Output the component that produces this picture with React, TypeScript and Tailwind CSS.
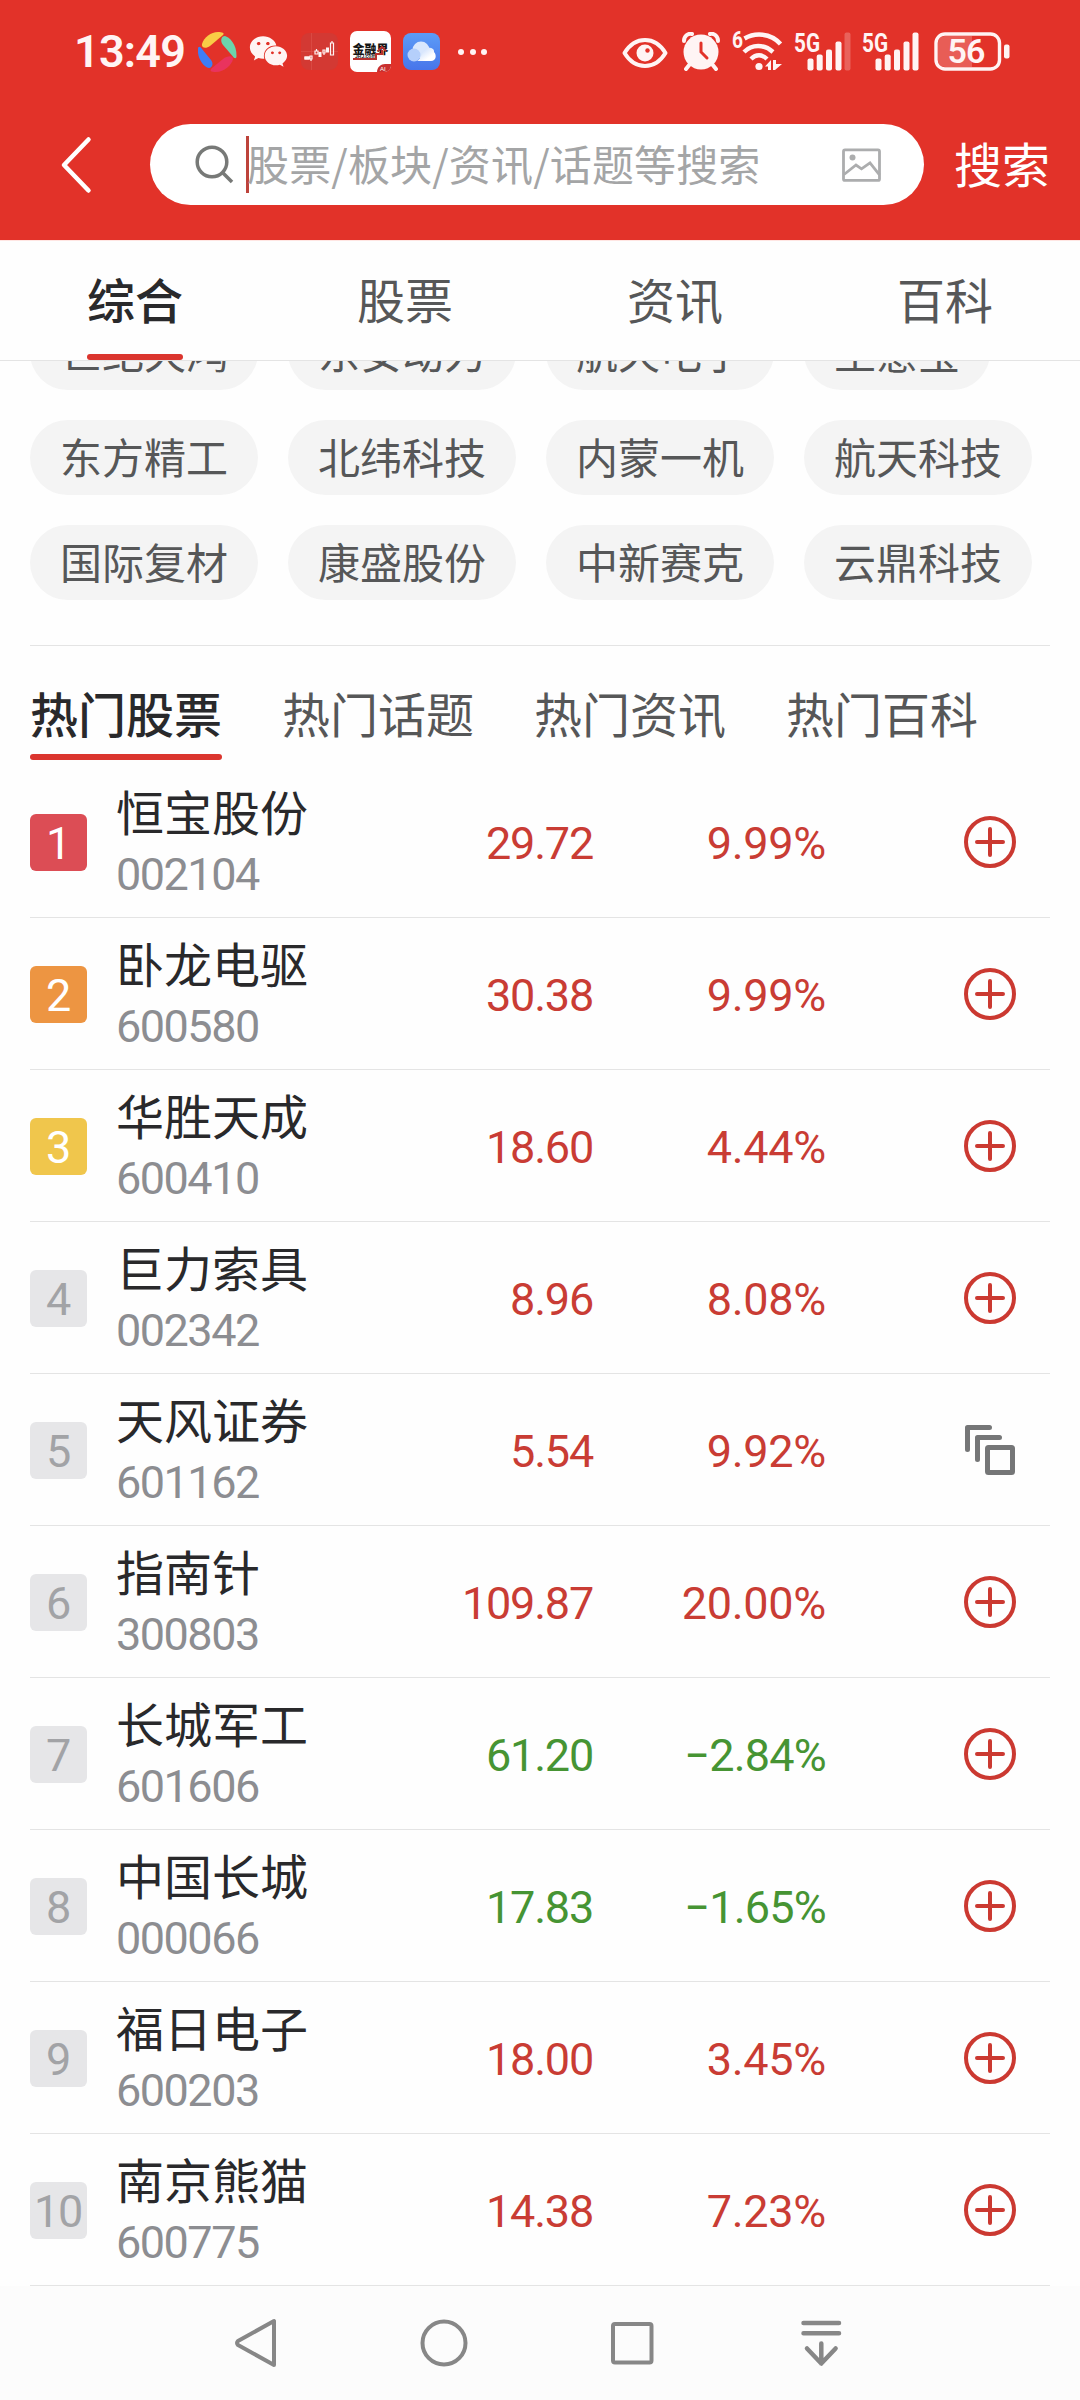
import { useState } from 'react';
import { FaWeixin } from 'react-icons/fa';

interface Stock {
  name: string;
  code: string;
  price: string;
  change: string;
  added?: boolean;
}

const tabs = ['综合', '股票', '资讯', '百科'];

const hotTabs = ['热门股票', '热门话题', '热门资讯', '热门百科'];

const keywords = [
  ['世纪天鸿', '东安动力', '航天电子', '生意宝'],
  ['东方精工', '北纬科技', '内蒙一机', '航天科技'],
  ['国际复材', '康盛股份', '中新赛克', '云鼎科技'],
];

const stocks: Stock[] = [
  { name: '恒宝股份', code: '002104', price: '29.72', change: '9.99%' },
  { name: '卧龙电驱', code: '600580', price: '30.38', change: '9.99%' },
  { name: '华胜天成', code: '600410', price: '18.60', change: '4.44%' },
  { name: '巨力索具', code: '002342', price: '8.96', change: '8.08%' },
  { name: '天风证券', code: '601162', price: '5.54', change: '9.92%', added: true },
  { name: '指南针', code: '300803', price: '109.87', change: '20.00%' },
  { name: '长城军工', code: '601606', price: '61.20', change: '−2.84%' },
  { name: '中国长城', code: '000066', price: '17.83', change: '−1.65%' },
  { name: '福日电子', code: '600203', price: '18.00', change: '3.45%' },
  { name: '南京熊猫', code: '600775', price: '14.38', change: '7.23%' },
];

const rankStyles = ['bg-[#dc4d55] text-white', 'bg-[#ed9542] text-white', 'bg-[#f0c64c] text-white'];

function Signal({ weak }: { weak?: boolean }) {
  return (
    <svg width="57" height="40" viewBox="0 0 57 40" fill="#fff4f4" className="shrink-0 overflow-visible">
      <text x="0" y="19.500" fontSize="26" fontWeight="700" textLength="26" lengthAdjust="spacingAndGlyphs" fontFamily="Roboto, sans-serif">5G</text>
      <rect x="13.5" y="26.5" width="6" height="12" rx="2" />
      <rect x="22.7" y="22.5" width="6" height="16" rx="2" />
      <rect x="32" y="17.5" width="6" height="21" rx="2" />
      <rect x="41.5" y="9.5" width="6" height="29" rx="2" />
      <rect x="50.5" y="0.5" width="6" height="38" rx="2" opacity={weak ? 0.25 : 1} />
    </svg>
  );
}

function StatusBar() {
  return (
    <div className="flex h-[103px] items-center pl-[74px] pr-[70px] text-[#fff4f4]">
      <span className="w-[124px] font-[Roboto] text-[45px] font-semibold leading-none tracking-[-0.8px]">13:49</span>

      <svg width="39" height="40" viewBox="0 0 39 40" className="shrink-0">
        <path d="M4 12C6 5 13 0 20 0c4 0 7 1 5 3L12 14c-4 3-9 2-8-2Z" fill="#f9cd46" />
        <path d="M27 4c4 1 12 8 11.500 20 0 3-2 3-4 0L25 13c-3-4-2-9 2-9Z" fill="#6cd3ac" />
        <path d="M35 27c-1 6-9 13-17 13-5 0-7-1-4-4l11-9c4-3 10-4 10 0Z" fill="#e9335e" />
        <path d="M11 36C5 35-1 25 0 17c0-3 2-3 4 0l9 11c3 4 1 8-2 8Z" fill="#3e7df5" />
      </svg>
      <FaWeixin className="ml-3 size-[39px] shrink-0" />

      <svg width="37" height="37" viewBox="0 0 37 37" className="ml-[13px] shrink-0">
        <rect width="37" height="37" rx="8" fill="#d33933" />
        <path d="M0 18.500h37M10.500 0v37" stroke="#dd5049" strokeWidth="0.700" />
        <g fill="none" stroke="#fff4f4" strokeWidth="1.200">
          <path d="M4 24h4v2H4zM9 23h2v3H9zM14 18h3v3h-3zM22 17h2v3h-2zM29.500 10h3v12h-3z" />
          <path d="M10 26v2M15.500 16v2M23 20v2M31 8v2" />
        </g>
        <path d="M3.500 23.500h5v3h-5zM17.500 19h3v5h-3zM25 14.500h3v5h-3z" fill="#fff4f4" />
      </svg>

      <svg width="41" height="41" viewBox="0 0 41 41" className="ml-[12px] shrink-0 overflow-visible">
        <rect width="41" height="41" rx="7" fill="#fff" />
        <text x="2.500" y="22.500" fontSize="12" fontWeight="900" textLength="36" lengthAdjust="spacingAndGlyphs" fill="#151515" fontFamily="'Noto Sans CJK SC', sans-serif">金融界</text>
        <text x="5" y="27" fontSize="5" fontWeight="700" fill="#151515" fontFamily="'Liberation Sans', sans-serif">JRJ.com</text>
        <path d="M3 28h23v-5h6v-4M28 20l4-4 4 4" fill="none" stroke="#b8322f" strokeWidth="2" />
        <path d="M27 41c0-5 4-8 8-8h6v1c0 4-3 7-7 7Z" fill="#c9302e" />
        <text x="30" y="39.500" fontSize="6" fill="#fff" fontFamily="'Liberation Sans', sans-serif">AI</text>
      </svg>

      <svg width="37" height="37" viewBox="0 0 37 37" className="ml-[12px] shrink-0">
        <defs>
          <linearGradient id="sky" x1="0" y1="0" x2="0" y2="1">
            <stop offset="0" stopColor="#5d9cf7" />
            <stop offset="1" stopColor="#4775ea" />
          </linearGradient>
          <linearGradient id="cloud" x1="0" y1="0" x2="1" y2="1">
            <stop offset="0" stopColor="#bcd4fb" />
            <stop offset="0.700" stopColor="#fff" />
          </linearGradient>
        </defs>
        <rect width="37" height="37" rx="8" fill="url(#sky)" />
        <circle cx="18" cy="17" r="8.500" fill="#d9e7fd" />
        <circle cx="11" cy="22" r="6.500" fill="#b5cffb" />
        <path d="M14 28c2-1 4-4 5-7 2-5 7-8 11-5 1 1 1 2 1 3 3 3 2 9-3 9Z" fill="url(#cloud)" />
      </svg>

      <div className="ml-[18px] flex gap-[5.500px]">
        <span className="size-[6px] rounded-full bg-[#fff4f4]" />
        <span className="size-[6px] rounded-full bg-[#fff4f4]" />
        <span className="size-[6px] rounded-full bg-[#fff4f4]" />
      </div>

      <div className="ml-auto flex items-center">
        <svg width="46" height="32" viewBox="0 0 46 32" className="mt-[2px]">
          <path d="M2.500 16C8 7 15 3 23 3s15 4 20.500 13C38 25 31 29 23 29S8 25 2.500 16Z" fill="none" stroke="#fff4f4" strokeWidth="4" strokeLinejoin="round" />
          <circle cx="23" cy="16" r="8.500" fill="#fff4f4" />
          <circle cx="25.500" cy="13.500" r="2.200" fill="#e23229" />
        </svg>
        <svg width="38" height="39" viewBox="0 0 38 39" className="ml-[14px]">
          <circle cx="19" cy="20" r="17.500" fill="#fff4f4" />
          <path d="M2 9C2 4 6 1 10 2M36 9c0-5-4-8-8-7" fill="none" stroke="#fff4f4" strokeWidth="4" strokeLinecap="round" />
          <path d="m8 32-4 5M30 32l4 5" stroke="#fff4f4" strokeWidth="4" strokeLinecap="round" />
          <path d="M19 11v9l6 6" fill="none" stroke="#e23229" strokeWidth="3" strokeLinecap="round" />
        </svg>
        <svg width="52" height="41" viewBox="0 0 52 41" className="ml-[12px] overflow-visible">
          <text x="0" y="16.500" fontSize="23" fontWeight="700" textLength="11" lengthAdjust="spacingAndGlyphs" fill="#fff4f4" fontFamily="Roboto, sans-serif">6</text>
          <g fill="none" stroke="#fff4f4" strokeWidth="4.400">
            <path d="M12.500 7.500c10-6 26-6 36 5.500" />
            <path d="M12 21c8-8 20-8 29 0" />
            <path d="M19 28c5-5 11-5 16 0" />
          </g>
          <circle cx="27" cy="35.500" r="3.600" fill="#fff4f4" />
          <path d="M33 35.500 39 29v10h-3v-3.500Zm8-6.500h3v4h6l-7 6h-2Z" fill="#fff4f4" />
        </svg>
        <div className="ml-[10px] flex gap-[11px]">
          <Signal weak />
          <Signal />
        </div>
        <svg width="76" height="39" viewBox="0 0 76 39" className="ml-[15px]">
          <rect x="2" y="2" width="63.500" height="35" rx="9" fill="none" stroke="#fff4f4" strokeWidth="3.400" />
          <path d="M11 4h27v31H11c-4 0-7-3-7-7V11c0-4 3-7 7-7Z" fill="#fff4f4" opacity="0.220" />
          <rect x="70" y="12.500" width="5.500" height="14" rx="2" fill="#fff4f4" />
          <text x="13.500" y="31" fontSize="34" fontWeight="600" textLength="38" fill="#fff4f4" fontFamily="Roboto, sans-serif">56</text>
        </svg>
      </div>
    </div>
  );
}

function SearchBar() {
  return (
    <div className="flex h-[124px] items-center pb-px">
      <svg width="150" height="60" viewBox="0 0 150 60" fill="none" className="shrink-0">
        <path d="M88.500 4.500 64 30l24.500 25.500" stroke="#fff" strokeWidth="4.500" strokeLinecap="round" strokeLinejoin="round" />
      </svg>
      <div className="flex h-[81px] w-[774px] items-center rounded-full bg-white pl-[45px] pr-[43px]">
        <svg width="40" height="40" viewBox="0 0 40 40" fill="none" stroke="#777977" strokeWidth="3.500" className="shrink-0">
          <circle cx="17" cy="17" r="14.800" />
          <path d="m27.500 27.500 9.500 9.500" />
        </svg>
        <div className="ml-[11px] h-[57px] w-[3px] shrink-0 bg-[#bd433b]" />
        <span className="-ml-[2px] flex-1 whitespace-nowrap pb-[4px] text-[42px] leading-none tracking-[0.15px] text-[#a4a5a6]">股票/板块/资讯/话题等搜索</span>
        <svg width="39" height="34" viewBox="0 0 39 34" fill="none" stroke="#acadae" strokeWidth="2.800" className="shrink-0">
          <rect x="1.500" y="1.900" width="36" height="30.500" rx="1.500" />
          <path d="m2 26.500 12-9.500 5.500 3.800 8.500-6 9.500 12" />
          <circle cx="10.500" cy="9.500" r="3" fill="#acadae" stroke="none" />
        </svg>
      </div>
      <span className="ml-[30px] pb-[6px] text-[48px] leading-none text-white">搜索</span>
    </div>
  );
}

function AddIcon() {
  return (
    <svg width="52" height="52" viewBox="0 0 52 52" fill="none" stroke="#cb3931" strokeWidth="4">
      <circle cx="26" cy="26" r="24" />
      <path d="M13 26h26M26 13v26" strokeLinecap="round" />
    </svg>
  );
}

function AddedIcon() {
  return (
    <svg width="52" height="52" viewBox="0 0 52 52" fill="none" stroke="#757677" strokeWidth="5" strokeLinecap="round" strokeLinejoin="round">
      <path d="M3.500 25.500v-22h22" />
      <path d="M13.500 35.500v-22h22" />
      <rect x="23.500" y="23.500" width="25" height="25" rx="1" />
    </svg>
  );
}

export default function App() {
  const [tab, setTab] = useState(0);
  const [hotTab, setHotTab] = useState(0);

  return (
    <div className="flex h-[2400px] w-[1080px] flex-col overflow-hidden bg-[#fefefe] font-['Noto_Sans_CJK_SC',sans-serif]">
      <header className="h-[240px] shrink-0 bg-[#e23229]">
        <StatusBar />
        <SearchBar />
      </header>

      <nav className="grid h-[121px] shrink-0 grid-cols-4 border-b border-[#e4e4e4] border-t border-t-[#ffe6e3]">
        {tabs.map((t, i) => (
          <button
            key={t}
            onClick={() => setTab(i)}
            className={`flex flex-col items-center justify-between pt-[32px] text-[48px] leading-[50px] ${
              i === tab ? 'font-medium text-[#29292b]' : 'text-[#565758]'
            }`}
          >
            {t}
            {i === tab && <span className="h-[6px] w-24 rounded-full bg-[#db352e]" />}
          </button>
        ))}
      </nav>

      {/* Keyword chips, first row is scrolled under the tabs */}
      <section className="h-[284px] shrink-0 overflow-hidden px-[30px]">
        <div className="-mt-[46px] space-y-[30px]">
          {keywords.map((row) => (
            <div key={row[0]} className="flex gap-[30px]">
              {row.map((k) => (
                <span key={k} className="flex h-[75px] items-center rounded-full bg-[#f4f4f4] px-[30px] pb-[4px] text-[42px] leading-none text-[#565758]">
                  {k}
                </span>
              ))}
            </div>
          ))}
        </div>
      </section>

      <main className="mx-[30px] shrink-0 border-t border-[#e4e4e4]">
        <div className="flex h-[120px] gap-[60px]">
          {hotTabs.map((t, i) => (
            <button
              key={t}
              onClick={() => setHotTab(i)}
              className={`flex h-[114px] w-48 flex-col justify-between pt-[41px] text-[48px] leading-[50px] ${
                i === hotTab ? 'font-medium text-[#29292b]' : 'text-[#565758]'
              }`}
            >
              {t}
              {i === hotTab && <span className="h-[6px] w-full rounded-full bg-[#db352e]" />}
            </button>
          ))}
        </div>

        {stocks.map((s, i) => {
          const down = s.change.startsWith('−');
          const color = down ? 'text-[#469433]' : 'text-[#c93c34]';
          return (
            <div key={s.code} className="flex h-[152px] items-center border-b border-[#e4e4e4] pt-px font-[Roboto] text-[45px] leading-none tracking-[-1.2px]">
              <span className={`flex size-[57px] shrink-0 items-center justify-center rounded-md pr-px pt-[2px] ${rankStyles[i] ?? 'bg-[#e6e6e8] text-[#a2a3a6]'}`}>
                {i + 1}
              </span>
              <div className="ml-[29px] w-[240px] shrink-0">
                <div className="font-['Noto_Sans_CJK_SC',sans-serif] text-[48px] leading-[55px] tracking-normal text-[#29292b]">{s.name}</div>
                <div className="mt-[10px] leading-[54px] tracking-[-1.5px] text-[#8c8d91]">{s.code}</div>
              </div>
              <span className={`w-[237px] shrink-0 pt-[2px] text-right ${color}`}>{s.price}</span>
              <span className={`w-[233px] shrink-0 pt-[2px] text-right ${down ? 'tracking-[-0.8px]' : 'tracking-[-0.3px]'} ${color}`}>{s.change}</span>
              <span className="ml-auto mr-[34px]">{s.added ? <AddedIcon /> : <AddIcon />}</span>
            </div>
          );
        })}
      </main>

      <footer className="grid flex-1 grid-cols-[repeat(4,189px)] items-center justify-items-center bg-[#fcfcfc] pl-[160px]">
        <svg width="48" height="50" viewBox="0 0 48 50" fill="none" stroke="#878787" strokeWidth="4" strokeLinejoin="round">
          <path d="M43 3v44L7 27q-2-2 0-4Z" />
        </svg>
        <svg width="48" height="50" viewBox="0 0 48 50" fill="none" stroke="#878787" strokeWidth="4">
          <circle cx="24" cy="25" r="21.500" />
        </svg>
        <svg width="48" height="50" viewBox="0 0 48 50" fill="none" stroke="#878787" strokeWidth="4">
          <rect x="4" y="6" width="38.500" height="38.500" rx="2" />
        </svg>
        <svg width="48" height="50" viewBox="0 0 48 50" fill="none" stroke="#878787" strokeWidth="4.500" strokeLinecap="round">
          <path d="M5.500 5H41M5.500 15.200H41M23.300 25.500v20M9 30.500l14.300 15 14.300-15" strokeLinejoin="round" />
        </svg>
      </footer>
    </div>
  );
}
